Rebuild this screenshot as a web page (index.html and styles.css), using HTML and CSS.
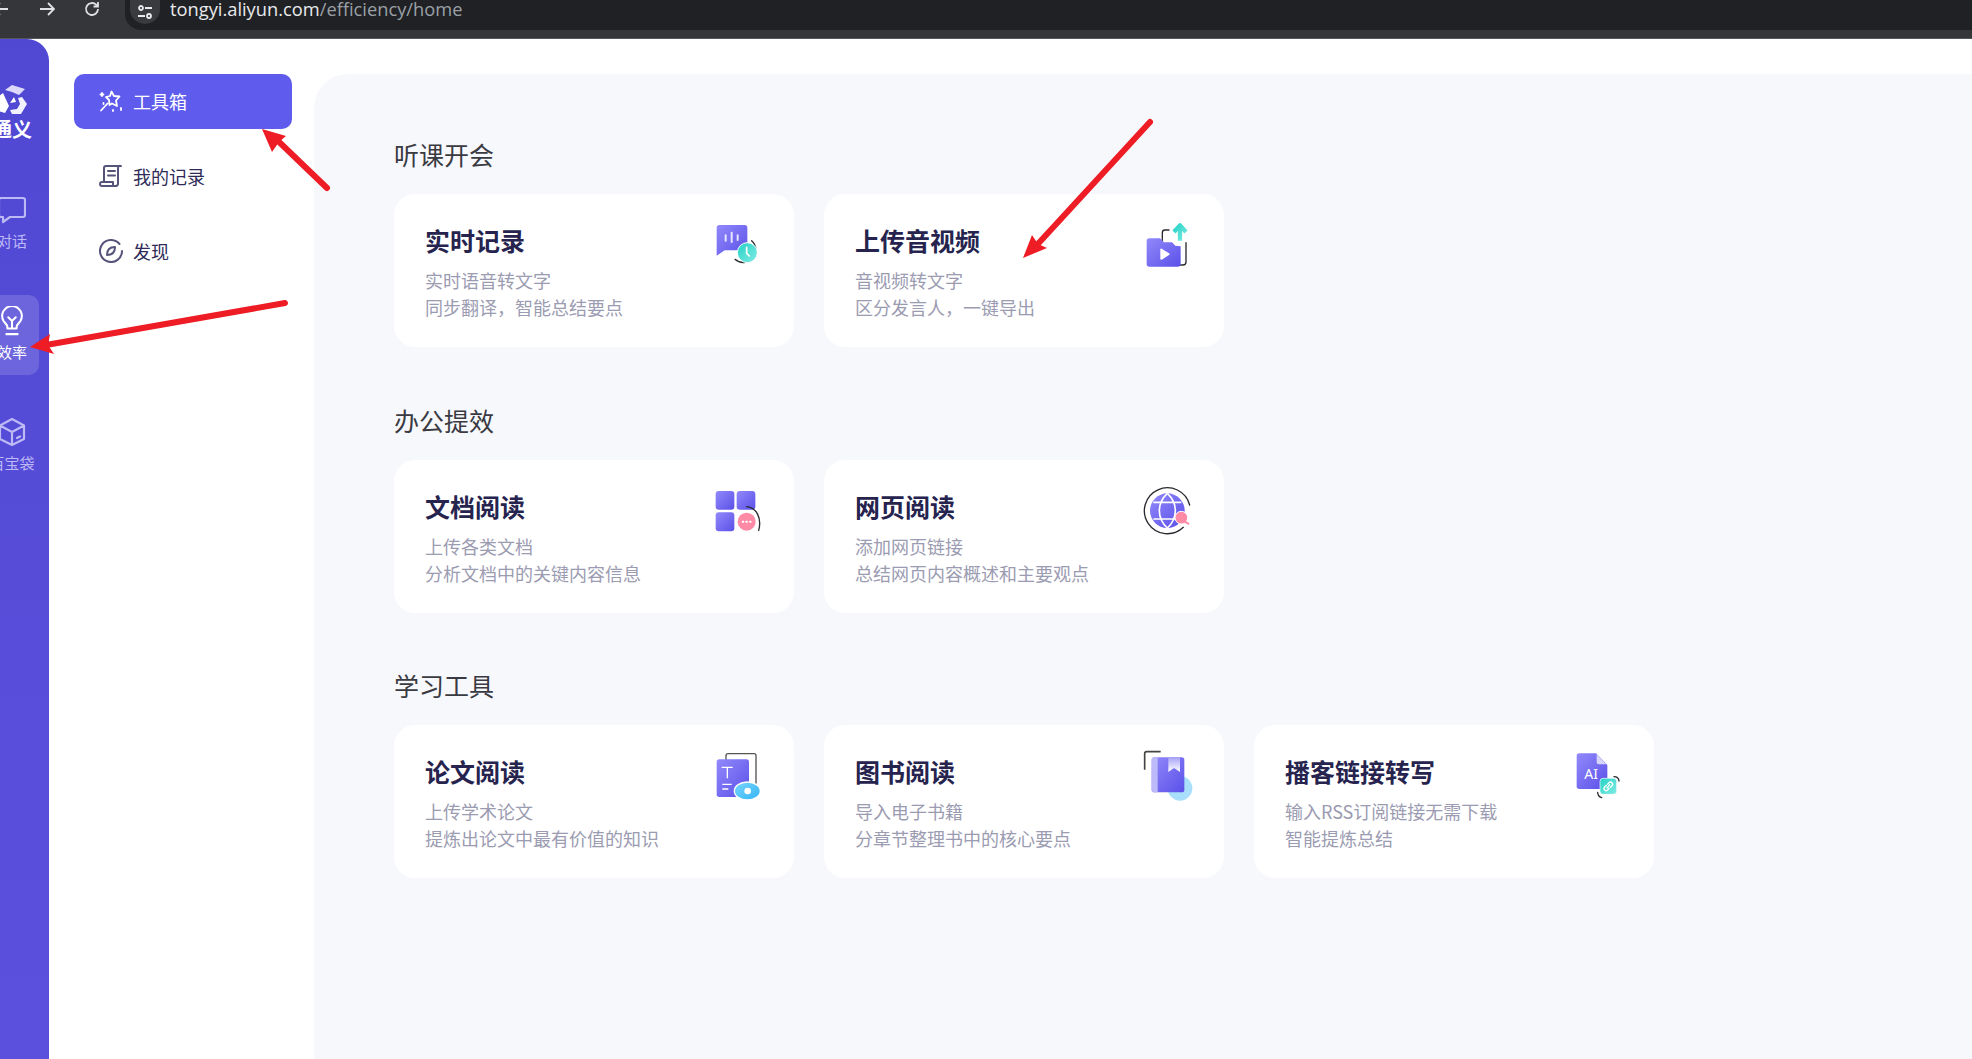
FILE: index.html
```html
<!DOCTYPE html>
<html lang="zh-CN">
<head>
<meta charset="utf-8">
<title>通义 效率</title>
<link rel="stylesheet" href="styles.css">
</head>
<body>
<header class="browser">
  <svg class="b-icon b-back" viewBox="0 0 16 16"><path d="M15 8H1M7 2 1 8l6 6"/></svg>
  <svg class="b-icon b-forward" viewBox="0 0 16 16"><path d="M1 8h14M9 2l6 6-6 6"/></svg>
  <svg class="b-icon b-reload" viewBox="0 0 16 16"><path d="M14 8a6 6 0 1 1-1.8-4.3L14 5.5M14 1v4.5H9.5"/></svg>
  <div class="url">
    <span class="tune"><svg viewBox="0 0 16 16"><circle cx="4" cy="4" r="2"/><path d="M8 4h7M1 12h7"/><circle cx="12" cy="12" r="2"/></svg></span>
    <span class="host">tongyi.aliyun.com</span><span class="path">/efficiency/home</span>
  </div>
</header>
<div class="app">
  <aside class="rail">
    <div class="rail-in">
      <svg class="logo" viewBox="0 0 40 32">
        <path d="M13 6 20 1 33 5 27 11 20 8Z" fill="#dcd9fa"/>
        <path d="M26 14 30 13 35 20 29 30H20L18 26 25 25 28 20Z" fill="#f1f0fe"/>
        <path d="M3 15 11 9 17 22 13 29 3 26 8 20Z" fill="#fff"/>
        <path d="M18 19 22 13 24 18Z" fill="#fff"/>
      </svg>
      <div class="brand">通义</div>
      <div class="rail-item">
        <svg class="rail-icon" viewBox="0 0 28 28"><path d="M3 2h22a2 2 0 0 1 2 2v15a2 2 0 0 1-2 2H12l-7 5v-5H3a2 2 0 0 1-2-2V4a2 2 0 0 1 2-2Z"/></svg>
        <span>对话</span>
      </div>
      <div class="rail-item on">
        <svg class="rail-icon" viewBox="0 0 28 32"><path d="M9 24v-2c0-2-2-3-4-6a10.500 10.500 0 1 1 18 0c-2 3-4 4-4 6v2Z"/><path d="M14 23v-7l-4-4M14 16l4-4M8 30h12"/></svg>
        <span>效率</span>
      </div>
      <div class="rail-item">
        <svg class="rail-icon" viewBox="0 0 28 30"><path d="M14 2 26 8.500V22L14 28 2 22V8.500ZM2 8.500 14 15 26 8.500M14 15v13M19 21l3-1.500"/></svg>
        <span>百宝袋</span>
      </div>
    </div>
  </aside>
  <nav class="side">
    <a class="side-item on">
      <svg viewBox="0 0 24 24"><path d="M12.500 2.500 15 7l5.500.5-3.500 4 1 5.500-5-2.500-2.500 1.500-.5-5-3-3 4-1ZM8.500 14.500 2 21.500"/><path d="M3 4v3M1.500 5.500h3M22 19v2M14 21v1M4.500 14v1"/></svg>
      <span>工具箱</span>
    </a>
    <a class="side-item">
      <svg viewBox="0 0 24 24"><path d="M5 18V4a2 2 0 0 1 2-2h15a2 2 0 0 0-3 2v16a2.500 2.500 0 0 1-2.500 2H3a2 2 0 0 1-2-2 2 2 0 0 1 2-2h11v2.500M9 7h7M9 11.500h7"/></svg>
      <span>我的记录</span>
    </a>
    <a class="side-item">
      <svg viewBox="0 0 24 24"><path d="M20.500 5A11 11 0 1 0 23 12"/><path d="M8 16c0-5 3-8 8-8 0 5-3 8-8 8Z"/></svg>
      <span>发现</span>
    </a>
  </nav>
  <main class="main">
    <section class="sec">
      <h2>听课开会</h2>
      <div class="cards">
        <article class="card">
          <div class="txt"><h3>实时记录</h3><p>实时语音转文字<br>同步翻译，智能总结要点</p></div>
          <svg class="ic" viewBox="60 12 180 180">
            <path d="M88 45h76a8 8 0 0 1 8 8v60a8 8 0 0 1-8 8H104l-24 16V53a8 8 0 0 1 8-8Z" fill="url(#pu)"/>
            <path d="M107 76v16M125 68v28M143 76v14" class="w6"/>
            <path d="M185 92a37 37 0 1 1-50 56" class="blk"/>
            <circle cx="172" cy="128" r="30" fill="url(#te)" stroke="#fff" stroke-width="3"/>
            <path d="M170 112v18l8 8" class="w4"/>
          </svg>
        </article>
        <article class="card">
          <div class="txt"><h3>上传音视频</h3><p>音视频转文字<br>区分发言人，一键导出</p></div>
          <svg class="ic" viewBox="60 12 180 180">
            <path d="M147 60h-12a8 8 0 0 0-8 8v24M198 98v58a9 9 0 0 1-9 9h-8" class="blk"/>
            <path d="M88 85h32l12 12h24l10 10 16 2v52a9 9 0 0 1-9 9H88a8 8 0 0 1-8-8V93a8 8 0 0 1 8-8Z" fill="url(#pu)"/>
            <path d="M121 118a3 3 0 0 1 4-2l22 14a3 3 0 0 1 0 5l-22 14a3 3 0 0 1-4-2Z" fill="#fff"/>
            <path d="M180 92V50M162 66l18-20 18 20" fill="none" stroke="url(#te)" stroke-width="13" stroke-linejoin="round"/>
          </svg>
        </article>
      </div>
    </section>
    <section class="sec">
      <h2>办公提效</h2>
      <div class="cards">
        <article class="card">
          <div class="txt"><h3>文档阅读</h3><p>上传各类文档<br>分析文档中的关键内容信息</p></div>
          <svg class="ic" viewBox="60 30 180 180">
            <rect x="77" y="63" width="56" height="56" rx="9" fill="url(#pu)"/>
            <rect x="140" y="63" width="56" height="56" rx="9" fill="url(#pu)"/>
            <rect x="77" y="127" width="56" height="57" rx="9" fill="url(#pu)"/>
            <circle cx="170" cy="155" r="27" fill="#ff8aa5"/>
            <path d="M158 155h2M169 155h2M180 155h2" class="w5"/>
            <path d="M170 110c30 3 46 35 36 71" class="blk"/>
          </svg>
        </article>
        <article class="card">
          <div class="txt"><h3>网页阅读</h3><p>添加网页链接<br>总结网页内容概述和主要观点</p></div>
          <svg class="ic" viewBox="60 30 180 180">
            <path d="M209 105A69 69 0 1 0 190 172" class="blk"/>
            <circle cx="142" cy="122" r="52" fill="url(#pu)"/>
            <path d="M100 97h84M100 147h84M142 70c-32 30-32 74 0 104M142 70c32 30 32 74 0 104" fill="none" stroke="#fff" stroke-width="5"/>
            <circle cx="184" cy="143" r="19" fill="#ff8aa5" stroke="#fff" stroke-width="3"/>
            <path d="M194 155l11 6" fill="none" stroke="#ff8aa5" stroke-width="6" stroke-linecap="round"/>
          </svg>
        </article>
      </div>
    </section>
    <section class="sec">
      <h2>学习工具</h2>
      <div class="cards">
        <article class="card">
          <div class="txt"><h3>论文阅读</h3><p>上传学术论文<br>提炼出论文中最有价值的知识</p></div>
          <svg class="ic" viewBox="60 30 180 180">
            <path d="M108 75V62a6 6 0 0 1 6-6h78a6 6 0 0 1 6 6v84" fill="none" stroke="#555" stroke-width="4"/>
            <rect x="80" y="73" width="97" height="113" rx="8" fill="url(#pu)"/>
            <path d="M95 97h33M112 97v33M97 148h28M97 162h18" fill="none" stroke="#fff" stroke-width="4"/>
            <ellipse cx="172" cy="168" rx="39" ry="27" fill="url(#bl)" stroke="#fff" stroke-width="4"/>
            <circle cx="173" cy="168" r="10" fill="#fff"/>
          </svg>
        </article>
        <article class="card">
          <div class="txt"><h3>图书阅读</h3><p>导入电子书籍<br>分章节整理书中的核心要点</p></div>
          <svg class="ic" viewBox="60 30 180 180">
            <path d="M122 50H80a6 6 0 0 0-6 6v48" fill="none" stroke="#444" stroke-width="5"/>
            <circle cx="180" cy="160" r="37" fill="#a9dffb"/>
            <rect x="95" y="67" width="98" height="105" rx="8" fill="url(#pu)"/>
            <path d="M103 67h10v105h-10a8 8 0 0 1-8-8V75a8 8 0 0 1 8-8Z" fill="#bcbaf9"/>
            <path d="M145 67h35v44l-18-12-17 12Z" fill="url(#wh)"/>
          </svg>
        </article>
        <article class="card">
          <div class="txt"><h3>播客链接转写</h3><p>输入RSS订阅链接无需下载<br>智能提炼总结</p></div>
          <svg class="ic" viewBox="60 30 180 180">
            <path d="M88 55h50l34 35v64a8 8 0 0 1-8 8H88a8 8 0 0 1-8-8V63a8 8 0 0 1 8-8Z" fill="url(#pu)"/>
            <path d="M140 58l29 30h-23a6 6 0 0 1-6-6Z" fill="#d8d5fb"/>
            <text x="103" y="132" class="ai">AI</text>
            <path d="M192 125c8 0 14 4 15 13M143 172c0 9 4 14 12 16" class="blk"/>
            <rect x="150" y="130" width="50" height="48" rx="9" fill="url(#te)" stroke="#fff" stroke-width="2"/>
            <path d="M170 150l-6 6a6 6 0 0 0 9 9l5-6M180 158l6-6a6 6 0 0 0-9-9l-5 6M170 160l10-12" fill="none" stroke="#fff" stroke-width="4"/>
          </svg>
        </article>
      </div>
    </section>
  </main>
</div>
<svg class="marks" viewBox="0 0 1972 1059">
  <defs>
    <linearGradient id="pu" x1="0" y1="0" x2="1" y2="1"><stop offset="0" stop-color="#9289fb"/><stop offset="1" stop-color="#5a50e8"/></linearGradient>
    <linearGradient id="te" x1="0" y1="0" x2="1" y2="1"><stop offset="0" stop-color="#23d2c6"/><stop offset="1" stop-color="#84ebe4"/></linearGradient>
    <linearGradient id="bl" x1="0" y1="0" x2="1" y2="1"><stop offset="0" stop-color="#79d6ff"/><stop offset="1" stop-color="#33b4f5"/></linearGradient>
    <linearGradient id="wh" x1="0" y1="0" x2="0" y2="1"><stop offset="0" stop-color="#a8a2f8"/><stop offset="1" stop-color="#ffffff"/></linearGradient>
  </defs>
  <path class="shaft" d="M327 188 276 139"/>
  <path class="head" d="M262 129 286 136 279 142 272 152Z"/>
  <path class="shaft" d="M285 303 46 345"/>
  <path class="head" d="M30 347 50 334 48 345 54 354Z"/>
  <path class="shaft" d="M1150 122 1036 246"/>
  <path class="head" d="M1023 258 1032 235 1038 244 1047 248Z"/>
</svg>
</body>
</html>
```
FILE: styles.css
```css
* { box-sizing: border-box; }
html, body { margin: 0; height: 100%; }
body {
  position: relative;
  overflow: hidden;
  background: #fff;
  font-family: "Noto Sans CJK SC", "Noto Sans", sans-serif;
  display: flex;
  flex-direction: column;
}
.browser {
  flex: none;
  height: 39px;
  background: #35363a;
  border-bottom: 1px solid #55565a;
  display: flex;
  align-items: flex-start;
}
.b-icon { width: 16px; height: 16px; margin-top: 1px; fill: none; stroke: #dfe1e5; stroke-width: 1.800; flex: none; }
.b-back { margin-left: -7px; }
.b-forward { margin-left: 30px; }
.b-reload { margin-left: 29px; }
.url {
  flex: 1;
  height: 30px;
  margin-left: 25px;
  background: #202124;
  border-bottom-left-radius: 16px;
  display: flex;
  align-items: flex-start;
  padding-left: 5px;
  font-family: "Open Sans", "Noto Sans", sans-serif;
  font-size: 18.300px;
  line-height: 18px;
}
.tune {
  width: 30px;
  height: 24px;
  border-radius: 0 0 15px 15px;
  background: #3a3b3f;
  margin-right: 10px;
  display: flex;
  align-items: center;
  justify-content: center;
}
.tune svg { width: 16px; height: 16px; fill: none; stroke: #e8eaed; stroke-width: 1.800; }
.host { color: #e8eaed; }
.path { color: #9aa0a6; }

.app { flex: 1; display: flex; min-height: 0; }
.rail {
  flex: none;
  width: 49px;
  background: linear-gradient(180deg, #5048d3 0%, #5b50de 100%);
  border-top-right-radius: 22px;
  overflow: hidden;
}
.rail-in {
  width: 54px;
  margin-left: -15px;
  padding-top: 45px;
  display: flex;
  flex-direction: column;
  align-items: center;
}
.logo { width: 40px; height: 32px; flex: none; }
.brand {
  font-size: 20px;
  line-height: 26px;
  font-weight: 700;
  color: #fff;
  margin-bottom: 42px;
  white-space: nowrap;
}
.rail-item {
  width: 54px;
  height: 80px;
  margin-bottom: 31px;
  border-radius: 10px;
  padding-top: 11px;
  display: flex;
  flex-direction: column;
  align-items: center;
  color: #bdb9f5;
  font-size: 15px;
  line-height: 20px;
  white-space: nowrap;
}
.rail-item.on { background: rgba(255, 255, 255, .15); color: #fff; }
.rail-icon { width: 28px; height: 30px; flex: none; margin-bottom: 6px; fill: none; stroke: currentColor; stroke-width: 2.200; stroke-linejoin: round; stroke-linecap: round; }

.side {
  flex: none;
  width: 265px;
  padding: 35px 22px 0 25px;
  display: flex;
  flex-direction: column;
  gap: 20px;
}
.side-item {
  height: 55px;
  border-radius: 10px;
  padding: 0 0 2px 25px;
  display: flex;
  align-items: center;
  gap: 10px;
  font-size: 18px;
  color: #2e2b58;
}
.side-item svg { width: 24px; height: 24px; flex: none; fill: none; stroke: #55537a; stroke-width: 2; stroke-linejoin: round; stroke-linecap: round; }
.side-item.on { background: #5f5ced; color: #fff; }
.side-item.on svg { stroke: #fff; stroke-width: 1.800; }

.main {
  flex: 1;
  margin-top: 35px;
  background: #f7f8fc;
  border-top-left-radius: 34px;
  padding: 63px 0 0 80px;
  display: flex;
  flex-direction: column;
  gap: 55.500px;
}
.sec h2 {
  margin: 0 0 23px;
  font-size: 25px;
  line-height: 34px;
  font-weight: 400;
  color: #3a3a42;
}
.cards { display: grid; grid-template-columns: repeat(3, 400px); gap: 30px; }
.card {
  height: 153px;
  background: #fff;
  border-radius: 21px;
  padding: 20px 24px 0 31px;
  display: flex;
  justify-content: space-between;
  align-items: flex-start;
}
.txt { padding-top: 10px; }
.txt h3 {
  margin: 0 0 11px;
  font-size: 25px;
  line-height: 32px;
  font-weight: 700;
  color: #26244f;
  white-space: nowrap;
}
.txt p {
  margin: 0;
  font-size: 18px;
  line-height: 27px;
  color: #9b9bb1;
  white-space: nowrap;
}
.ic { width: 60px; height: 60px; flex: none; }
.blk { fill: none; stroke: #2a2a30; stroke-width: 4; stroke-linecap: round; }
.w6 { fill: none; stroke: #e8e6ff; stroke-width: 6; stroke-linecap: round; }
.w5 { fill: none; stroke: #fff; stroke-width: 6; stroke-linecap: round; }
.w4 { fill: none; stroke: #fff; stroke-width: 5; stroke-linecap: round; stroke-linejoin: round; }
.ai { font-family: "Noto Sans", sans-serif; font-size: 42px; fill: #fff; }

.marks { position: absolute; left: 0; top: 0; width: 1972px; height: 1059px; pointer-events: none; }
.shaft { fill: none; stroke: #ee1c25; stroke-width: 6; stroke-linecap: round; }
.head { fill: #ee1c25; }
```
